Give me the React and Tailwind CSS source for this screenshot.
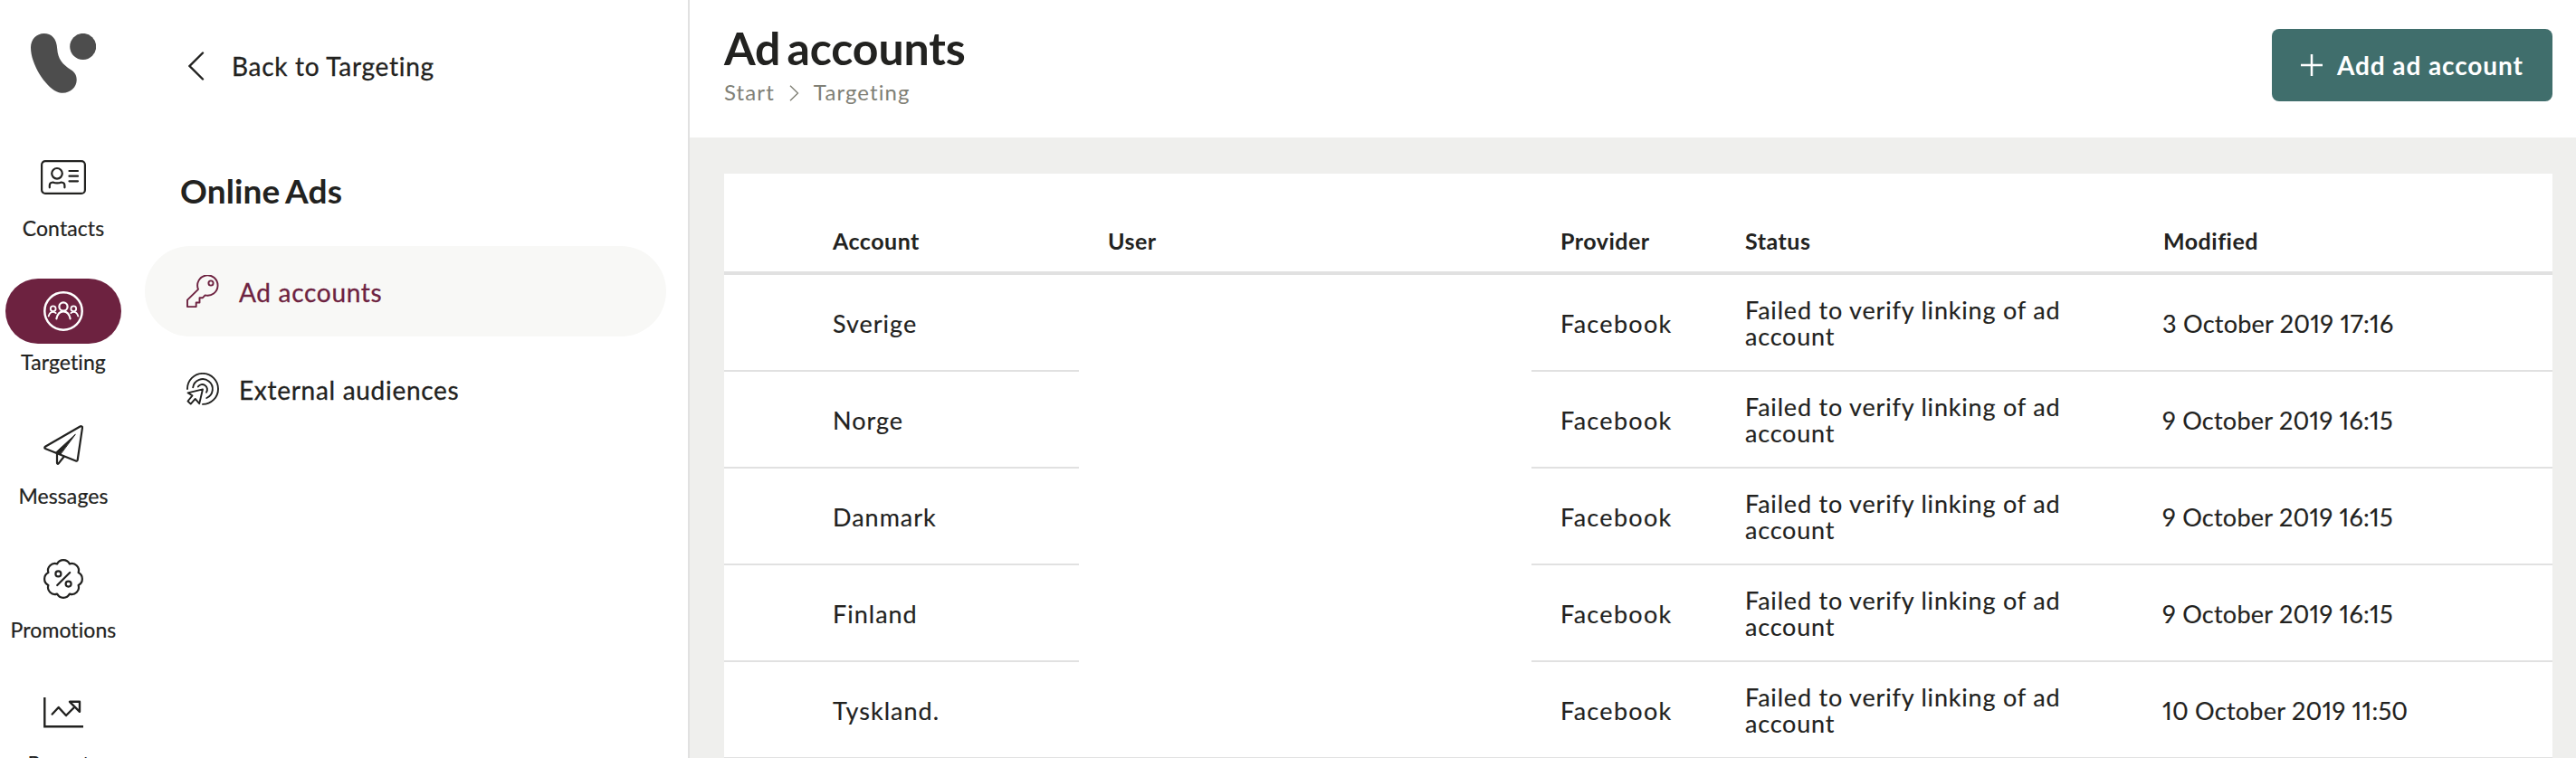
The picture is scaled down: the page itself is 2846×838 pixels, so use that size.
import React from 'react';

const ContactsIcon = () => (
  <svg className="w-[50px] h-[38px]" viewBox="0 0 50 38" fill="none" stroke="currentColor" strokeWidth="2.2" strokeLinecap="round" strokeLinejoin="round">
    <rect x="1.1" y="1.1" width="47.8" height="35.8" rx="4" />
    <circle cx="18" cy="14.8" r="5.8" />
    <path d="M9.8 30.3v-2q0-3.6 3.6-3.8q4.8 1.9 9.4 0q3.6.2 3.6 3.8v2" />
    <path d="M31.5 12h9.5M31.5 17.7h9.5M31.5 23.3h9.5" />
  </svg>
);

const TargetingIcon = () => (
  <svg className="w-11 h-11" viewBox="0 0 44 44" fill="none" stroke="currentColor" strokeWidth="2.2" strokeLinecap="round">
    <circle cx="22" cy="22" r="20.7" strokeWidth="2.5" />
    <circle cx="22" cy="17" r="4.6" />
    <path d="M14.4 30.3c1-5 3.9-8 7.6-8s6.6 3 7.6 8" />
    <circle cx="10.7" cy="19.3" r="2.9" strokeWidth="1.8" />
    <circle cx="33.3" cy="19.3" r="2.9" strokeWidth="1.8" />
    <path d="M5.7 27.6c.8-3 2.6-4.8 5-4.8 1.2 0 2.2.5 3 1.4M38.3 27.6c-.8-3-2.6-4.8-5-4.8-1.2 0-2.2.5-3 1.4" strokeWidth="1.8" />
  </svg>
);

const MessagesIcon = () => (
  <svg className="w-11 h-11" viewBox="0 0 44 44" fill="none" stroke="currentColor" strokeWidth="2.2" strokeLinecap="round" strokeLinejoin="round">
    <path d="M40.5 1.5L2 23.8c-1 .6-1 1.800.1 2.200l33.600 13.500c1 .4 1.800 0 2-1L43 2.800c.1-1.300-1.300-2-2.500-1.300z" />
    <path d="M15 31v10.800c0 1.100 1 1.400 1.700.6l5.800-7.400" />
    <path d="M35 10.500L13.500 30.200l5 2z" fill="currentColor" strokeWidth="1" />
  </svg>
);

const PromotionsIcon = () => (
  <svg className="w-11 h-11" viewBox="0 0 44 44" fill="none" stroke="currentColor" strokeWidth="2.2" strokeLinecap="round" strokeLinejoin="round">
    <path d="M15.1 5.4A7.7 7.7 0 0 1 28.9 5.4A7.7 7.7 0 0 1 38.6 15.1A7.7 7.7 0 0 1 38.6 28.9A7.7 7.7 0 0 1 28.9 38.6A7.7 7.7 0 0 1 15.1 38.6A7.7 7.7 0 0 1 5.4 28.9A7.7 7.7 0 0 1 5.4 15.1A7.7 7.7 0 0 1 15.1 5.4z" />
    <circle cx="16.4" cy="16.4" r="3" />
    <circle cx="27.6" cy="27.6" r="3" />
    <path d="M29.2 15L15.2 29" />
  </svg>
);

const ReportsIcon = () => (
  <svg className="w-11 h-[34px]" viewBox="0 0 44 34" fill="none" stroke="currentColor" strokeWidth="2.4" strokeLinejoin="round">
    <path d="M1.3 0v32.3H44" strokeLinejoin="miter" />
    <path d="M9.7 18.5l7-7.5L25 20l8.5-8.5" strokeLinecap="round" />
    <path d="M29 4.8h11v11z" />
  </svg>
);

const KeyIcon = () => (
  <svg className="w-9 h-9" viewBox="0 0 36 36" fill="none" stroke="currentColor" strokeWidth="1.9" strokeLinejoin="round">
    <path d="M13 15.8a11.2 11.2 0 1 1 7.6 6.6L18 25.2h-3.5v5.3h-3.8v4.6H1v-7.4l12-11.9z" />
    <circle cx="27" cy="9" r="2.6" />
  </svg>
);

const AudienceIcon = () => (
  <svg className="w-9 h-9" viewBox="0 0 36 36" fill="none" stroke="currentColor" strokeWidth="1.9" strokeLinecap="round" strokeLinejoin="round">
    <path d="M1 18A17 17 0 1 1 18 34.9" />
    <path d="M7.2 16.3A10.9 10.9 0 1 1 22.3 28" />
    <path d="M12.8 15.5A5.5 5.5 0 1 1 22 21.7" />
    <path d="M18 18.3L1.5 22.3l5 3.1-5 6.1 3.2 3.1 5-5.7 4.5 5.3z" />
  </svg>
);

const navItems = [
  { label: 'Contacts', icon: ContactsIcon },
  { label: 'Targeting', icon: TargetingIcon, active: true },
  { label: 'Messages', icon: MessagesIcon },
  { label: 'Promotions', icon: PromotionsIcon },
  { label: 'Reports', icon: ReportsIcon },
];

const accounts = [
  { name: 'Sverige', modified: '3 October 2019 17:16' },
  { name: 'Norge', modified: '9 October 2019 16:15' },
  { name: 'Danmark', modified: '9 October 2019 16:15' },
  { name: 'Finland', modified: '9 October 2019 16:15' },
  { name: 'Tyskland.', modified: '10 October 2019 11:50' },
];

function NavRail() {
  return (
    <nav className="w-[140px] shrink-0 flex flex-col items-center">
      <div className="h-[160px] pt-[37px] shrink-0">
        <svg className="w-[72px] h-[66px] text-[#4d4d4d]" viewBox="0 0 72 66" fill="currentColor">
          <circle cx="57.7" cy="14.4" r="14.5" />
          <path d="M14.6 0C6.5 0 0 6.3 0 15.5C0 34 16 58.5 28.5 64.2C39.5 69 50.7 61.5 50.7 51.5C50.7 46.5 48.8 43 44.5 40.2C35 34 30 28.5 29.2 17C28.7 5.5 22.8 0 14.6 0z" />
        </svg>
      </div>
      {navItems.map(({ label, icon: Icon, active }) => (
        <a key={label} href="#" className="h-[148px] shrink-0 flex flex-col items-center">
          <span className={active ? 'w-32 h-[72px] rounded-full bg-[#6d2240] text-white flex items-center justify-center' : 'w-32 h-[72px] flex items-center justify-center'}>
            <Icon />
          </span>
          <span className="mt-1.5 text-[23px] leading-7 tracking-[0.1px] [-webkit-text-stroke:0.2px]">{label}</span>
        </a>
      ))}
    </nav>
  );
}

function Sidebar() {
  return (
    <aside className="w-[622px] shrink-0 border-r-2 border-[#e1e1e1] pl-5 pr-6">
      <a href="#" className="h-[145px] pl-12 flex items-center text-[28px] tracking-[0.7px] [-webkit-text-stroke:0.3px]">
        <svg className="w-[18px] h-8 mr-[30px]" viewBox="0 0 18 32" fill="none" stroke="currentColor" strokeWidth="2.4" strokeLinecap="round">
          <path d="M16 1.5L1.5 16L16 30.5" />
        </svg>
        Back to Targeting
      </a>
      <h2 className="h-[127px] pl-[39px] pt-11 text-[37px] leading-[44px] font-bold tracking-[0.1px] [word-spacing:-2px]">Online Ads</h2>
      <div className="flex flex-col gap-2 text-[28px] tracking-[0.7px] [-webkit-text-stroke:0.3px]">
        <a href="#" className="h-[100px] pl-[46px] rounded-full bg-[#f8f8f6] text-[#6d2240] flex items-center gap-[22px]">
          <KeyIcon />
          <span className="pt-0.5">Ad accounts</span>
        </a>
        <a href="#" className="h-[100px] pl-[46px] flex items-center gap-[22px]">
          <AudienceIcon />
          <span className="pt-0.5">External audiences</span>
        </a>
      </div>
    </aside>
  );
}

function AccountsTable() {
  return (
    <table className="w-full table-fixed border-separate border-spacing-0 bg-white text-left">
      <colgroup>
        <col className="w-[88px]" />
        <col className="w-[304px]" />
        <col className="w-[500px]" />
        <col className="w-[204px]" />
        <col className="w-[462px]" />
        <col className="w-[462px]" />
      </colgroup>
      <thead>
        <tr className="h-28 text-[25px] leading-[30px] tracking-[0.5px] *:px-8 *:pb-[19px] *:align-bottom *:border-b-4 *:border-[#e1e1e1] *:font-bold">
          <th></th>
          <th>Account</th>
          <th>User</th>
          <th>Provider</th>
          <th>Status</th>
          <th>Modified</th>
        </tr>
      </thead>
      <tbody>
        {accounts.map((account, i) => (
          <tr key={account.name} className="h-[107px] text-[27px] leading-[29px] [-webkit-text-stroke:0.15px] *:px-8 *:border-b-2 *:border-[#e1e1e1]">
            <td></td>
            <td className="pt-0.5 tracking-[1px]">{account.name}</td>
            {/* user column is blank, only the last row keeps its line */}
            <td className={i < accounts.length - 1 ? 'border-white!' : ''}></td>
            <td className="pt-0.5 pr-0! tracking-[1.3px]">Facebook</td>
            <td className="tracking-[0.8px]">Failed to verify linking of ad account</td>
            <td className="pt-0.5 pl-[31px]! proportional-nums tracking-[0.25px]">{account.modified}</td>
          </tr>
        ))}
      </tbody>
    </table>
  );
}

function App() {
  return (
    <div className="h-[838px] overflow-hidden flex bg-white text-[#222220] font-[Lato,sans-serif]">
      <NavRail />
      <Sidebar />
      <main className="flex-1 bg-[#efefed]">
        <header className="h-[152px] pl-[38px] pr-[26px] pt-8 bg-white flex items-start justify-between">
          <div className="-mt-2">
            <h1 className="text-[50px] leading-[58px] font-bold tracking-[-0.1px] [word-spacing:-5px]">Ad accounts</h1>
            <div className="flex items-center text-[24px] leading-[30px] mt-[5px] tracking-[1.1px] text-[#808076]">
              <span>Start</span>
              <svg className="w-[11px] h-[18px] mx-4 mt-0.5" viewBox="0 0 11 18" fill="none" stroke="currentColor" strokeWidth="1.4">
                <path d="M1 .8L9.5 9L1 17.2" />
              </svg>
              <span>Targeting</span>
            </div>
          </div>
          <button className="w-[310px] h-20 pl-8 rounded-lg bg-[#406e6c] text-white text-[28px] font-bold tracking-[0.9px] flex items-center gap-4">
            <svg className="w-6 h-6" viewBox="0 0 24 24" fill="none" stroke="currentColor" strokeWidth="2.5">
              <path d="M12 0v24M0 12h24" />
            </svg>
            Add ad account
          </button>
        </header>
        <section className="pl-[38px] pr-[26px] pt-10">
          <AccountsTable />
        </section>
      </main>
    </div>
  );
}

export default App;
